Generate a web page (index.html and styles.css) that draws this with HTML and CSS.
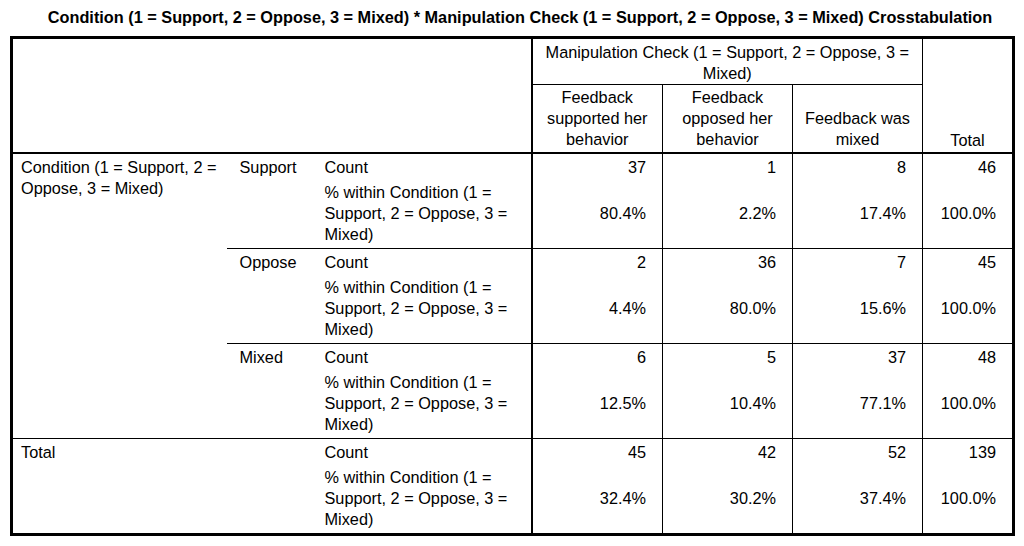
FILE: index.html
```html
<!DOCTYPE html>
<html>
<head>
<meta charset="utf-8">
<link rel="stylesheet" href="styles.css">
</head>
<body>
<div class="title">Condition (1 = Support, 2 = Oppose, 3 = Mixed) * Manipulation Check (1 = Support, 2 = Oppose, 3 = Mixed) Crosstabulation</div>
<table class="xtab">
  <colgroup>
    <col class="c-var"><col class="c-cat"><col class="c-stat">
    <col class="c-num1"><col class="c-num"><col class="c-num"><col class="c-tot">
  </colgroup>
  <thead>
    <tr class="h1">
      <th class="corner" colspan="3" rowspan="2"></th>
      <th class="span-head" colspan="3">Manipulation Check (1 = Support, 2 = Oppose, 3 =<br>Mixed)</th>
      <th class="tot-head" rowspan="2">Total</th>
    </tr>
    <tr class="h2">
      <th class="sub-head first">Feedback<br>supported her<br>behavior</th>
      <th class="sub-head">Feedback<br>opposed her<br>behavior</th>
      <th class="sub-head">Feedback was<br>mixed</th>
    </tr>
  </thead>
  <tbody>
    <tr class="r-count">
      <td class="var" rowspan="6">Condition (1 = Support, 2 =<br>Oppose, 3 = Mixed)</td>
      <td class="cat" rowspan="2">Support</td>
      <td class="stat">Count</td>
      <td class="num first">37</td><td class="num">1</td><td class="num">8</td><td class="num">46</td>
    </tr>
    <tr class="r-pct">
      <td class="stat">% within Condition (1 =<br>Support, 2 = Oppose, 3 =<br>Mixed)</td>
      <td class="num first">80.4%</td><td class="num">2.2%</td><td class="num">17.4%</td><td class="num">100.0%</td>
    </tr>
    <tr class="r-count sep">
      <td class="cat" rowspan="2">Oppose</td>
      <td class="stat">Count</td>
      <td class="num first">2</td><td class="num">36</td><td class="num">7</td><td class="num">45</td>
    </tr>
    <tr class="r-pct">
      <td class="stat">% within Condition (1 =<br>Support, 2 = Oppose, 3 =<br>Mixed)</td>
      <td class="num first">4.4%</td><td class="num">80.0%</td><td class="num">15.6%</td><td class="num">100.0%</td>
    </tr>
    <tr class="r-count sep">
      <td class="cat" rowspan="2">Mixed</td>
      <td class="stat">Count</td>
      <td class="num first">6</td><td class="num">5</td><td class="num">37</td><td class="num">48</td>
    </tr>
    <tr class="r-pct">
      <td class="stat">% within Condition (1 =<br>Support, 2 = Oppose, 3 =<br>Mixed)</td>
      <td class="num first">12.5%</td><td class="num">10.4%</td><td class="num">77.1%</td><td class="num">100.0%</td>
    </tr>
    <tr class="r-count sep total-row">
      <td class="var" colspan="2" rowspan="2">Total</td>
      <td class="stat">Count</td>
      <td class="num first">45</td><td class="num">42</td><td class="num">52</td><td class="num">139</td>
    </tr>
    <tr class="r-pct">
      <td class="stat">% within Condition (1 =<br>Support, 2 = Oppose, 3 =<br>Mixed)</td>
      <td class="num first">32.4%</td><td class="num">30.2%</td><td class="num">37.4%</td><td class="num">100.0%</td>
    </tr>
  </tbody>
</table>
</body>
</html>
```

FILE: styles.css
```css
html, body {
  margin: 0;
  padding: 0;
  background: #ffffff;
}

body {
  width: 1024px;
  height: 546px;
  overflow: hidden;
  font-family: "Liberation Sans", Arial, Helvetica, sans-serif;
  color: #000;
}

.title {
  margin-top: 7px;
  padding-left: 16px;
  text-align: center;
  font-weight: bold;
  font-size: 16.3px;
  line-height: 20px;
  white-space: nowrap;
}

.xtab {
  margin-top: 9px;
  margin-left: 10px;
  border-collapse: collapse;
  table-layout: fixed;
  width: 1003px;
  border: 3px solid #000;
  font-size: 16.3px;
  line-height: 21px;
}

.c-var { width: 215px; }
.c-cat { width: 91px; }
.c-stat { width: 214px; }
.c-num1 { width: 131px; }
.c-num { width: 130px; }
.c-tot { width: 91px; }

.xtab th,
.xtab td {
  padding: 0;
  font-weight: normal;
  white-space: nowrap;
}

/* header */
.corner {
  border-right: 2px solid #000;
  border-bottom: 2px solid #000;
}

.span-head {
  text-align: center;
  vertical-align: top;
  padding-top: 3px !important;
  border-left: 2px solid #000;
  border-bottom: 1px solid #000;
}

.sub-head {
  text-align: center;
  vertical-align: bottom;
  padding: 2px 0 2px !important;
  border-left: 1px solid #000;
  border-bottom: 2px solid #000;
}

.sub-head.first {
  border-left: 2px solid #000;
}

.tot-head {
  text-align: center;
  vertical-align: bottom;
  padding-bottom: 1px !important;
  border-left: 1px solid #000;
  border-bottom: 2px solid #000;
}

/* body */
.var {
  vertical-align: top;
  text-align: left;
  padding-left: 8px !important;
}

.cat {
  vertical-align: top;
  text-align: left;
  padding-left: 13px !important;
}

.stat {
  vertical-align: top;
  text-align: left;
  padding-left: 7px !important;
}

.num {
  text-align: right;
  padding-right: 16px !important;
  border-left: 1px solid #000;
}

.num.first {
  border-left: 2px solid #000;
}

.r-count td {
  padding-top: 3px !important;
  padding-bottom: 1px !important;
}

.r-count .num {
  vertical-align: top;
}

.r-pct td {
  padding-top: 3px !important;
  padding-bottom: 3px !important;
}

.r-pct .num {
  vertical-align: middle;
}

.sep td {
  border-top: 1px solid #000;
}
```
